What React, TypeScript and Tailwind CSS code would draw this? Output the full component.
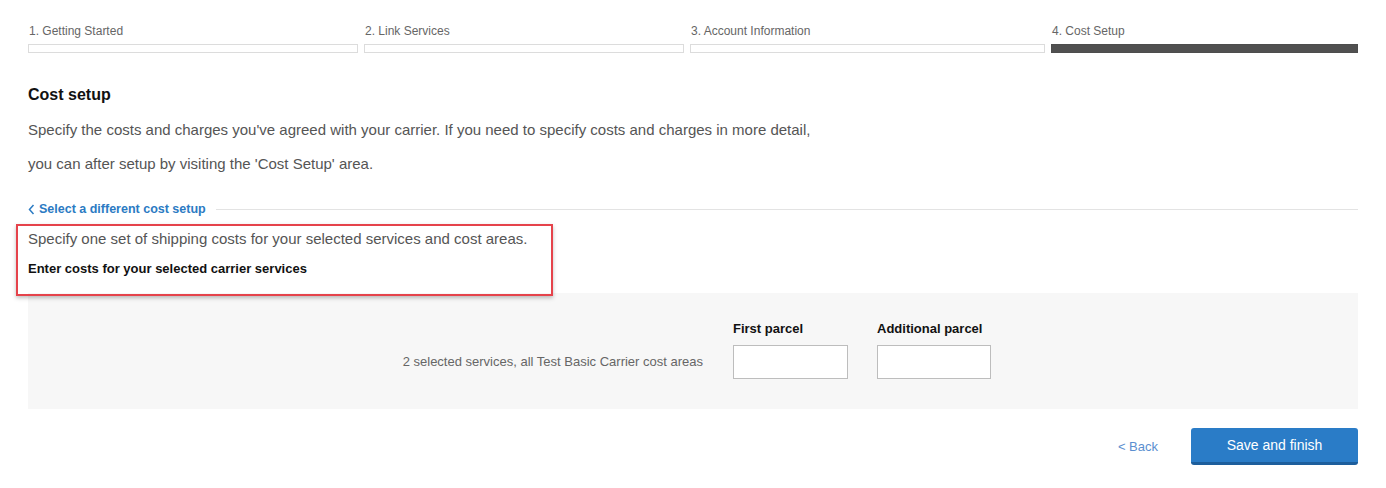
const steps = [
  { label: '1. Getting Started', w: 'w-[330px]', active: false },
  { label: '2. Link Services', w: 'w-[320px]', active: false },
  { label: '3. Account Information', w: 'w-[355px]', active: false },
  { label: '4. Cost Setup', w: 'flex-1', active: true },
];

export default function App() {
  return (
    <main className="min-h-screen bg-white px-[28px] font-['Liberation_Sans',Arial,sans-serif]">
      {/* wizard progress */}
      <div className="flex gap-[6px] pt-[23px]">
        {steps.map((s) => (
          <div key={s.label} className={s.w}>
            <div className="pl-[1px] text-[12px] leading-[16px] text-[#666]">{s.label}</div>
            <div
              className={
                s.active
                  ? 'mt-[5px] h-[9px] border border-[#4d4d4d] bg-[#505050]'
                  : 'mt-[5px] h-[9px] border border-[#dcdcdc] bg-white'
              }
            />
          </div>
        ))}
      </div>

      <h2 className="mt-[32px] text-[16px] font-bold leading-[20px] text-[#111]">Cost setup</h2>
      <p className="mt-[8px] text-[15px] leading-[34px] text-[#555]">
        Specify the costs and charges you've agreed with your carrier. If you need to specify costs and charges in more detail,
      </p>
      <p className="text-[15px] leading-[34px] text-[#555]">
        you can after setup by visiting the 'Cost Setup' area.
      </p>

      <div className="mt-[20px] flex items-center gap-[10px]">
        <a className="flex items-center gap-[4px] text-[12.5px] font-bold leading-[16px] text-[#2b7bc3]">
          <svg width="7" height="11" viewBox="0 0 7 11" fill="none">
            <path d="M5.5 1 1.5 5.5l4 4.5" stroke="#2b7bc3" strokeWidth="1.5" />
          </svg>
          Select a different cost setup
        </a>
        <div className="h-px flex-1 bg-[#e3e3e3]" />
      </div>

      <div className="relative mt-[12px]">
        <div className="pointer-events-none absolute left-[-12px] top-[-5px] z-10 h-[72px] w-[537px] border-2 border-[#e5434b] shadow-[0_2px_4px_rgba(0,0,0,0.25)]" />
        <p className="text-[15px] leading-[20px] text-[#555]">
          Specify one set of shipping costs for your selected services and cost areas.
        </p>
        <p className="mt-[12px] text-[13px] font-bold leading-[16px] text-[#111]">
          Enter costs for your selected carrier services
        </p>
      </div>

      <div className="mt-[16px] flex h-[116px] items-end bg-[#f7f7f7] pb-[30px]">
        <div className="w-[675px] pb-[9px] text-right text-[13px] leading-[16px] text-[#666]">
          2 selected services, all Test Basic Carrier cost areas
        </div>
        <div className="ml-[30px] flex flex-col">
          <label className="text-[13px] font-bold leading-[16px] text-[#111]">First parcel</label>
          <input className="mt-[8px] h-[34px] w-[115px] border border-[#bdbdbd] bg-white" />
        </div>
        <div className="ml-[29px] flex flex-col">
          <label className="text-[13px] font-bold leading-[16px] text-[#111]">Additional parcel</label>
          <input className="mt-[8px] h-[34px] w-[114px] border border-[#bdbdbd] bg-white" />
        </div>
      </div>

      <div className="mt-[19px] flex items-center justify-end gap-[33px]">
        <a className="text-[13px] leading-[16px] text-[#5b8fd0]">&lt; Back</a>
        <button className="h-[37px] w-[167px] rounded-[3px] border-b-[3px] border-[#1d5e9c] bg-[#2a7cc7] text-[14px] text-white">
          Save and finish
        </button>
      </div>
    </main>
  );
}
